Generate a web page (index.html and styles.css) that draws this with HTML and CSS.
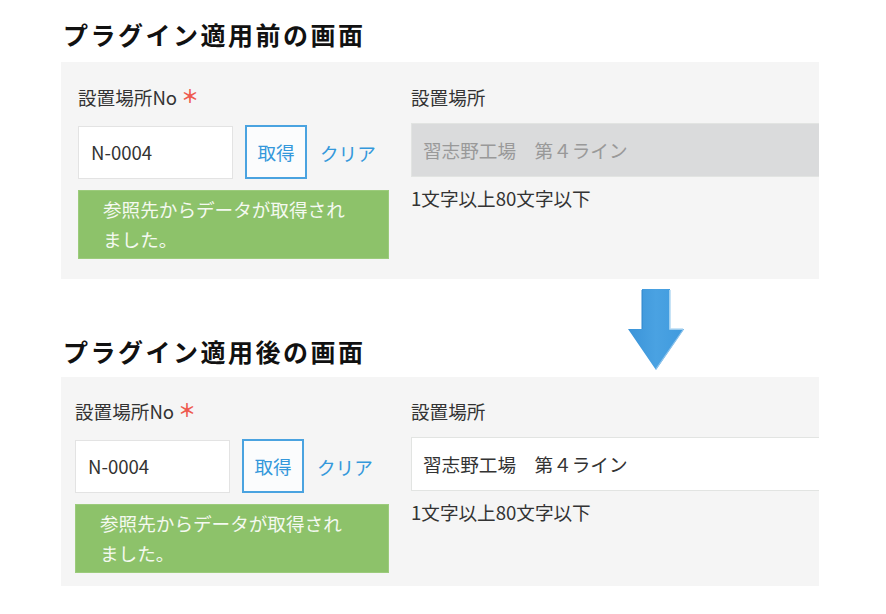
FILE: index.html
```html
<!DOCTYPE html>
<html lang="ja">
<head>
<meta charset="utf-8">
<title>プラグイン適用前後</title>
<link rel="stylesheet" href="styles.css">
</head>
<body>
<div class="page">
  <h2 class="title title-first">プラグイン適用前の画面</h2>
  <section class="panel">
    <div class="col-left">
      <div class="label">設置場所No<span class="req">＊</span></div>
      <div class="row">
        <div class="input">N-0004</div>
        <div class="btn">取得</div>
        <div class="clear">クリア</div>
      </div>
      <div class="notice">参照先からデータが取得され<br>ました。</div>
    </div>
    <div class="col-right">
      <div class="label">設置場所</div>
      <div class="wide-input disabled">習志野工場　第４ライン</div>
      <div class="hint">1文字以上80文字以下</div>
    </div>
  </section>

  <div class="between">
    <svg class="arrow" width="60" height="86" viewBox="0 0 60 86" aria-hidden="true">
      <defs>
        <linearGradient id="ag" x1="0" y1="0" x2="1" y2="0">
          <stop offset="0" stop-color="#3a93d8"/>
          <stop offset="0.5" stop-color="#4aa2e2"/>
          <stop offset="1" stop-color="#3f9ade"/>
        </linearGradient>
      </defs>
      <polygon points="16,2 44,2 44,42 58,42 30,83 2,42 16,42" fill="url(#ag)"/>
      <polyline points="44,3 44,42 57,42" fill="none" stroke="#b9dcf4" stroke-width="1.6"/>
      <polyline points="57,43 30,82" fill="none" stroke="#8ec4ec" stroke-width="1.2"/>
      <polyline points="16,3 16,42" fill="none" stroke="#2f86cc" stroke-width="1"/>
    </svg>
    <h2 class="title title-second">プラグイン適用後の画面</h2>
  </div>

  <section class="panel panel-after">
    <div class="col-left">
      <div class="label">設置場所No<span class="req">＊</span></div>
      <div class="row">
        <div class="input">N-0004</div>
        <div class="btn">取得</div>
        <div class="clear">クリア</div>
      </div>
      <div class="notice">参照先からデータが取得され<br>ました。</div>
    </div>
    <div class="col-right">
      <div class="label">設置場所</div>
      <div class="wide-input">習志野工場　第４ライン</div>
      <div class="hint">1文字以上80文字以下</div>
    </div>
  </section>
</div>
</body>
</html>
```

FILE: styles.css
```css
* { box-sizing: border-box; }
html, body { margin: 0; padding: 0; background: #ffffff; }
body {
  font-family: "Noto Sans CJK JP", "Noto Sans", sans-serif;
  color: #333333;
  width: 886px;
  height: 614px;
  overflow: hidden;
}
.page { padding-left: 61px; padding-top: 17px; }

.title {
  margin: 0;
  font-size: 25px;
  line-height: 34px;
  font-weight: 700;
  letter-spacing: 2.5px;
  color: #111111;
  padding-left: 2px;
}
.title-first { margin-bottom: 11px; }

.panel {
  width: 758px;
  background: #f5f5f5;
  display: flex;
  overflow: hidden;
  padding: 22px 0 20px 17px;
}
.panel-after { padding: 21px 0 13px 14px; }

.col-left { width: 311px; flex: none; }
.panel-after .col-left { width: 314px; }
.col-right { flex: none; width: 430px; margin-left: 22px; }
.panel-after .col-right { margin-left: 22px; }

.label {
  font-size: 18.6px;
  line-height: 26px;
  color: #333333;
  white-space: nowrap;
}
.req {
  color: #ee5a4f;
  font-size: 18px;
  font-weight: 700;
  line-height: 20px;
  margin-left: 4px;
  vertical-align: 2px;
}

.row {
  display: flex;
  align-items: center;
  margin-top: 15px;
}
.input {
  width: 155px;
  height: 53px;
  background: #ffffff;
  border: 1px solid #e3e3e3;
  font-size: 18.6px;
  line-height: 50px;
  padding-left: 12px;
  color: #333333;
}
.btn {
  margin-left: 12px;
  width: 62px;
  height: 54px;
  border: 2px solid #4aa3e0;
  background: #fbfcfd;
  color: #3498db;
  font-size: 18.6px;
  line-height: 50px;
  text-align: center;
}
.clear {
  margin-left: 13px;
  color: #3498db;
  font-size: 18.6px;
  white-space: nowrap;
}

.notice {
  margin-top: 11px;
  width: 100%;
  background: #8dc26a;
  border: 1px solid #9ccb7c;
  color: #f4f9f0;
  font-size: 18.6px;
  line-height: 30px;
  padding: 3px 0 4px 24px;
}

.wide-input {
  margin-top: 13px;
  height: 54px;
  width: 430px;
  border: 1px solid #e2e4e2;
  background: #ffffff;
  font-size: 18.6px;
  line-height: 52px;
  padding-left: 11px;
  color: #333333;
  white-space: nowrap;
}
.wide-input.disabled {
  background: #dadbdc;
  color: #999999;
}
.hint {
  margin-top: 8px;
  font-size: 18.6px;
  line-height: 26px;
  color: #333333;
  white-space: nowrap;
}

.between {
  position: relative;
  padding-top: 55px;
  margin-bottom: 9px;
}
.arrow {
  position: absolute;
  left: 565px;
  top: 8px;
}
```
